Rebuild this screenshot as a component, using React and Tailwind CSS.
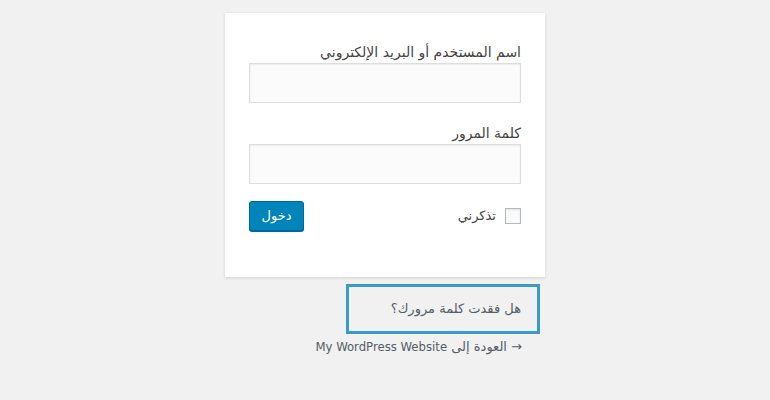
export default function App() {
  return (
    <div
      dir="rtl"
      className="min-h-[400px] w-full bg-[#f1f1f1] text-[#444]"
      style={{ fontFamily: '"DejaVu Sans", Tahoma, sans-serif' }}
    >
      <div className="mx-auto w-[320px] pt-[13px]">
        <form className="bg-white px-[24px] pt-[29px] pb-[46px] shadow-[0_1px_3px_rgba(0,0,0,0.13)]">
          <label className="block text-[14px] leading-[21px]">اسم المستخدم أو البريد الإلكتروني</label>
          <input
            type="text"
            className="mb-[20px] block h-[40px] w-full border border-[#ddd] bg-[#fbfbfb] shadow-[inset_0_1px_2px_rgba(0,0,0,0.07)] outline-none"
          />
          <label className="block text-[14px] leading-[21px]">كلمة المرور</label>
          <input
            type="password"
            className="block h-[40px] w-full border border-[#ddd] bg-[#fbfbfb] shadow-[inset_0_1px_2px_rgba(0,0,0,0.07)] outline-none"
          />
          <div className="mt-[17px] flex items-center justify-between">
            <label className="flex items-center gap-[9px] text-[13px]">
              <span className="block h-[16px] w-[16px] border border-[#b4b9be] bg-[#fbfbfb] shadow-[inset_0_1px_2px_rgba(0,0,0,0.1)]"></span>
              <span>تذكرني</span>
            </label>
            <button
              type="button"
              className="h-[30px] w-[55px] rounded-[3px] border border-[#006799] bg-[#0085ba] text-[13px] text-white shadow-[0_1px_0_#006799]"
            >
              دخول
            </button>
          </div>
        </form>
        <div className="mx-[5px] mt-[7px] flex justify-start">
          <div className="flex h-[50px] w-[194px] items-center border-[3px] border-[#3a9acb] pr-[16px] text-[13px] text-[#555d66]">
            هل فقدت كلمة مرورك؟
          </div>
        </div>
        <div className="mt-[3px] pr-[23px] text-[13px] text-[#555d66]">
          → العودة إلى{" "}
          <span style={{ fontFamily: '"DejaVu Sans Condensed", "DejaVu Sans", sans-serif' }}>My WordPress Website</span>
        </div>
      </div>
    </div>
  );
}
